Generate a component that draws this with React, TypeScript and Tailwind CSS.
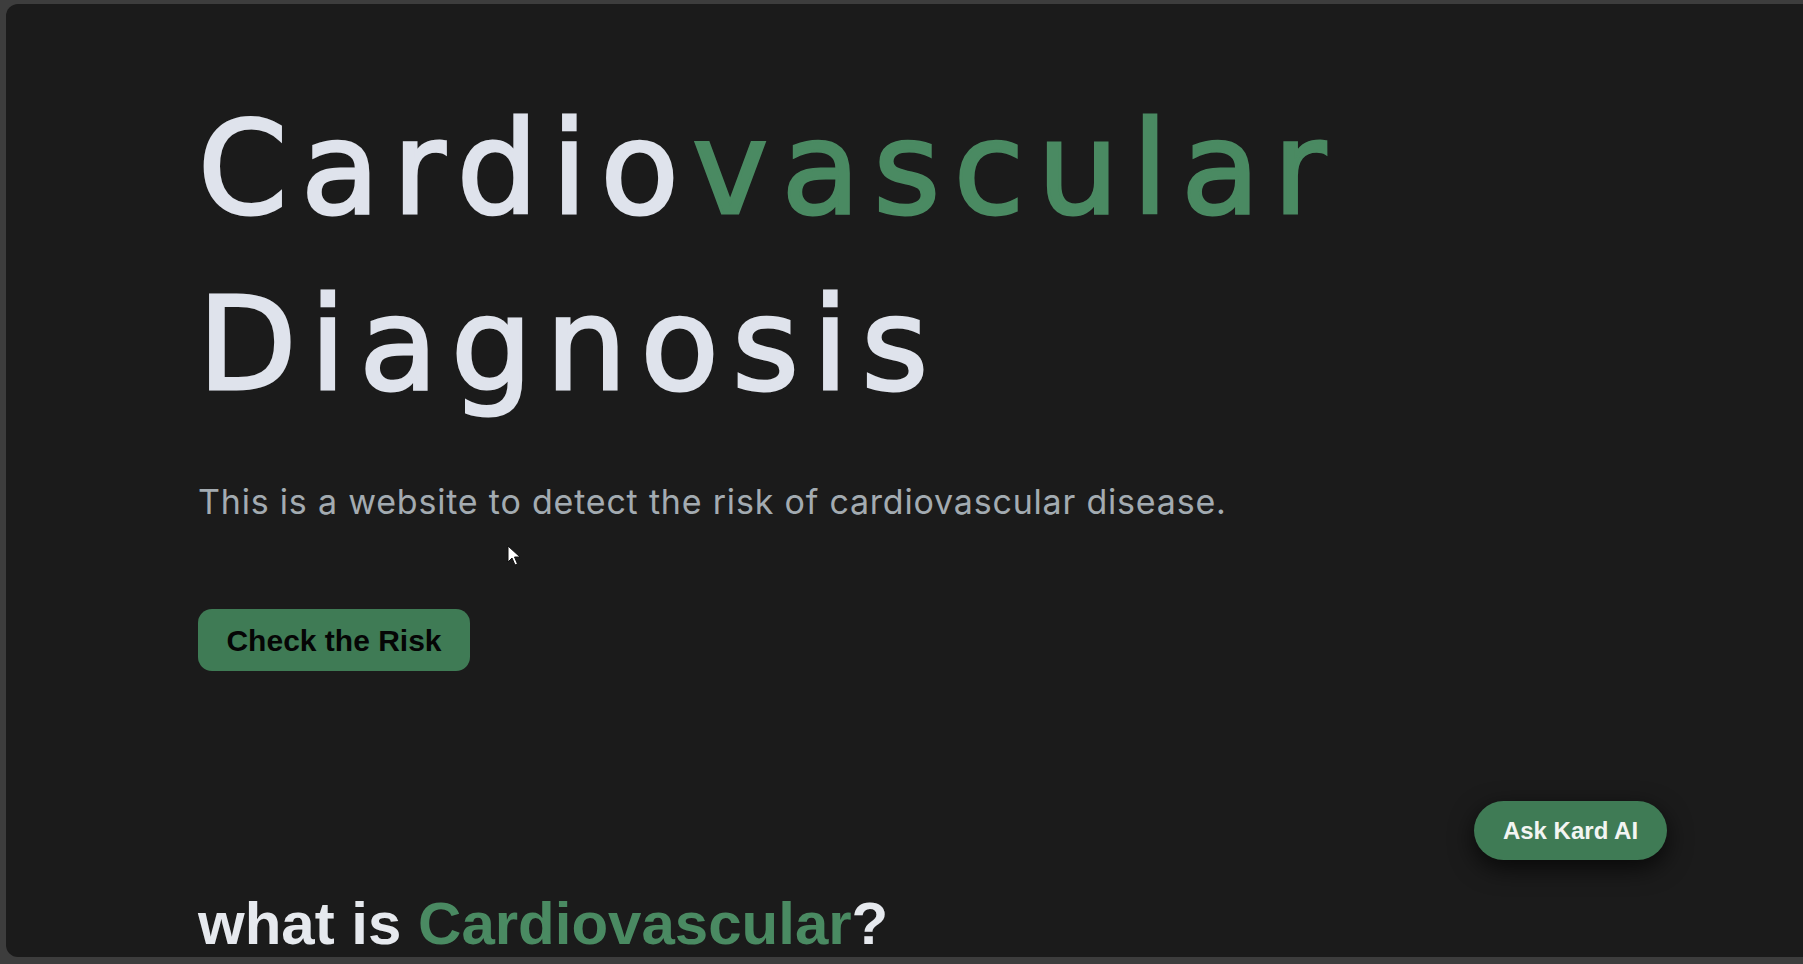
import React from "react";

const Cursor = () => (
  <svg width="14" height="22" viewBox="0 0 14 22" className="absolute left-[501px] top-[541px]">
    <path d="M1 1 L1 17 L5 13 L8 20 L10.5 19 L7.5 12 L13 12 Z" fill="#fff" stroke="#111" strokeWidth="1" />
  </svg>
);

const App = () => {
  return (
    <div className="h-[964px] w-full overflow-hidden bg-[#3d3d3d] pt-[4px] pb-[7px] pl-[6px]">
      <div className="relative h-full overflow-hidden rounded-l-[12px] bg-[#1b1b1b] pl-[192px] pt-[77px]">
        <h1
          className="text-[128px] leading-[176px] tracking-[13.5px] text-[#dfe3ec] [-webkit-text-stroke:3px_currentColor]"
          style={{ fontFamily: '"DejaVu Sans", sans-serif' }}
        >
          Cardio<span className="text-[#4a8a62]">vascular</span>
          <br />
          Diagnosis
        </h1>

        <p
          className="mt-[45px] text-[34px] leading-[48px] tracking-[0.8px] text-[#a3abb1]"
          style={{ fontFamily: "Inter, sans-serif" }}
        >
          This is a website to detect the risk of cardiovascular disease.
        </p>

        <button
          className="mt-[83px] flex h-[62px] w-[272px] items-center justify-center rounded-[14px] bg-[#3f7b55] text-[30px] font-bold text-[#050505]"
          style={{ fontFamily: '"Liberation Sans", Arial, sans-serif' }}
        >
          Check the Risk
        </button>

        <h2
          className="mt-[218px] text-[60px] font-bold leading-[69px] text-[#e6e9ee]"
          style={{ fontFamily: '"Liberation Sans", Arial, sans-serif' }}
        >
          what is <span className="text-[#4a8a62]">Cardiovascular</span>?
        </h2>

        <button
          className="absolute right-[136px] bottom-[97px] flex h-[59px] w-[193px] items-center justify-center rounded-full bg-[#3f7b55] text-[24px] font-bold text-[#f3f5f2] shadow-[0_8px_24px_rgba(0,0,0,0.7)]"
          style={{ fontFamily: '"Liberation Sans", Arial, sans-serif' }}
        >
          Ask Kard AI
        </button>

        <Cursor />
      </div>
    </div>
  );
};

export default App;
